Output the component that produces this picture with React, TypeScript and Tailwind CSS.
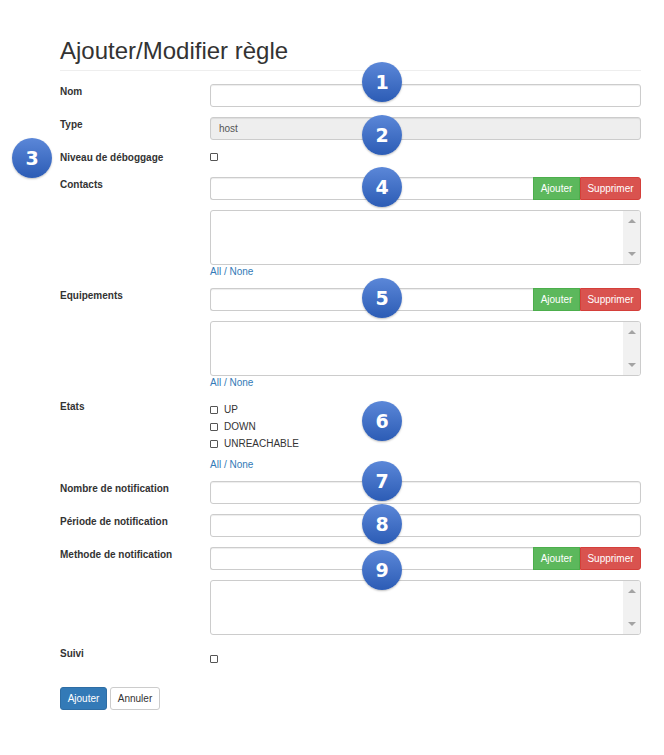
import React from "react";

const font = { fontFamily: '"Liberation Sans", Arial, sans-serif' };

const Badge = ({ n, x, y }: { n: number; x: number; y: number }) => (
  <div
    className="absolute w-[40px] h-[40px] rounded-full bg-gradient-to-b from-[#5b87d8] to-[#2c5cb5] shadow-[0_1px_2px_rgba(0,0,0,0.25)] flex items-center justify-center text-white text-[19px] font-bold"
    style={{ left: x - 20, top: y - 20, fontFamily: '"DejaVu Sans", Verdana, sans-serif' }}
  >
    {n}
  </div>
);

const Label = ({ children }: { children: React.ReactNode }) => (
  <div className="w-[150px] shrink-0 pt-[2px] text-[10px] leading-[12px] font-bold text-[#333]">
    {children}
  </div>
);

const Input = ({ value, disabled }: { value?: string; disabled?: boolean }) => (
  <div
    className={
      "h-[23px] w-full border border-[#ccc] rounded-[3px] px-[8px] flex items-center text-[10px] text-[#555] shadow-[inset_0_1px_1px_rgba(0,0,0,0.075)] " +
      (disabled ? "bg-[#eee]" : "bg-white")
    }
  >
    {value}
  </div>
);

const Checkbox = () => (
  <span className="block w-[8px] h-[8px] border border-[#555] rounded-[1px] bg-white" />
);

const InputGroup = () => (
  <div className="flex h-[23px]">
    <div className="flex-1 border border-[#ccc] border-r-0 rounded-l-[3px] bg-white shadow-[inset_0_1px_1px_rgba(0,0,0,0.075)]" />
    <button className="w-[47px] bg-[#5cb85c] border border-[#4cae4c] text-white text-[10px]">
      Ajouter
    </button>
    <button className="w-[61px] bg-[#d9534f] border border-[#d43f3a] rounded-r-[3px] text-white text-[10px]">
      Supprimer
    </button>
  </div>
);

const ListBox = () => (
  <div className="mt-[10px] h-[55px] border border-[#ccc] rounded-[3px] bg-white flex justify-end overflow-hidden">
    <div className="w-[17px] bg-[#f1f1f1] flex flex-col items-center justify-between py-[8px]">
      <span className="w-0 h-0 border-l-[4px] border-r-[4px] border-b-[4px] border-l-transparent border-r-transparent border-b-[#a3a3a3]" />
      <span className="w-0 h-0 border-l-[4px] border-r-[4px] border-t-[4px] border-l-transparent border-r-transparent border-t-[#a3a3a3]" />
    </div>
  </div>
);

const AllNone = ({ className = "" }: { className?: string }) => (
  <div className={"h-[13px] text-[10px] leading-[13px] text-[#337ab7] " + className}>
    All / None
  </div>
);

export default function App() {
  return (
    <div className="relative w-[664px] h-[755px] bg-white text-[#333]" style={font}>
      <div className="pl-[60px] w-[641px] pt-[35px]">
        <div className="border-b border-[#eee] pb-[3px]">
          <h1 className="text-[24px] leading-[32px] font-normal text-[#333]">
            Ajouter/Modifier règle
          </h1>
        </div>

        <div className="mt-[13px] flex flex-col gap-[10px]">
          <div className="flex">
            <Label>Nom</Label>
            <div className="flex-1">
              <Input />
            </div>
          </div>

          <div className="flex">
            <Label>Type</Label>
            <div className="flex-1">
              <Input value="host" disabled />
            </div>
          </div>

          <div className="flex h-[17px]">
            <Label>Niveau de déboggage</Label>
            <div className="flex-1 pt-[3px]">
              <Checkbox />
            </div>
          </div>

          <div className="flex">
            <Label>Contacts</Label>
            <div className="flex-1">
              <InputGroup />
              <ListBox />
              <AllNone />
            </div>
          </div>

          <div className="flex">
            <Label>Equipements</Label>
            <div className="flex-1">
              <InputGroup />
              <ListBox />
              <AllNone />
            </div>
          </div>

          <div className="flex">
            <Label>Etats</Label>
            <div className="flex-1 pt-[2px] text-[10px] text-[#333]">
              {["UP", "DOWN", "UNREACHABLE"].map((s) => (
                <div key={s} className="h-[17px] flex items-center gap-[6px]">
                  <Checkbox />
                  <span>{s}</span>
                </div>
              ))}
              <AllNone className="mt-[6px]" />
            </div>
          </div>

          <div className="flex">
            <Label>Nombre de notification</Label>
            <div className="flex-1">
              <Input />
            </div>
          </div>

          <div className="flex">
            <Label>Période de notification</Label>
            <div className="flex-1">
              <Input />
            </div>
          </div>

          <div className="flex">
            <Label>Methode de notification</Label>
            <div className="flex-1">
              <InputGroup />
              <ListBox />
            </div>
          </div>

          <div className="flex mt-[1px]">
            <Label>Suivi</Label>
            <div className="flex-1 pt-[9px]">
              <Checkbox />
            </div>
          </div>
        </div>

        <div className="mt-[24px] flex gap-[3px]">
          <button className="h-[23px] w-[47px] rounded-[3px] bg-[#337ab7] border border-[#2e6da4] text-white text-[10px]">
            Ajouter
          </button>
          <button className="h-[23px] w-[50px] rounded-[3px] bg-white border border-[#ccc] text-[#333] text-[10px]">
            Annuler
          </button>
        </div>
      </div>

      <Badge n={1} x={382} y={82} />
      <Badge n={2} x={382} y={135} />
      <Badge n={3} x={32} y={158} />
      <Badge n={4} x={382} y={187} />
      <Badge n={5} x={382} y={298} />
      <Badge n={6} x={382} y={421} />
      <Badge n={7} x={382} y={481} />
      <Badge n={8} x={382} y={524} />
      <Badge n={9} x={382} y={570} />
    </div>
  );
}
